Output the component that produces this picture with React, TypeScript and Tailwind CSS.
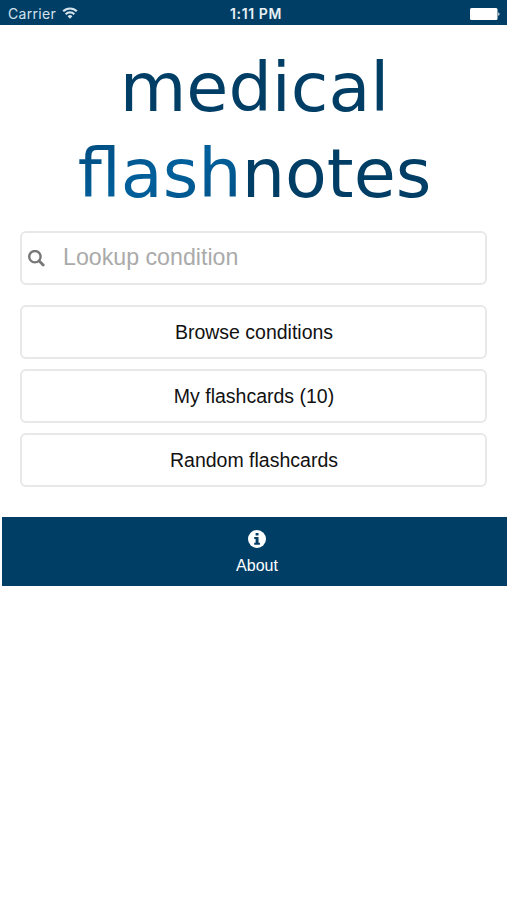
function SearchIcon() {
    return (
        <svg
            viewBox="0 0 17 17"
            className="size-[17px] shrink-0"
            fill="none"
            stroke="currentColor"
            strokeWidth="2.4"
        >
            <circle cx="6.9" cy="6.7" r="5.7" />
            <path d="m11.2 11 4 4" strokeWidth="2.8" strokeLinecap="round" />
        </svg>
    );
}

function InfoIcon() {
    return (
        <svg viewBox="0 0 18 18" className="size-[18px]">
            <circle cx="9" cy="9" r="9" fill="currentColor" />
            <g fill="#003e66">
                <rect x="7.6" y="3" width="2.9" height="2.6" rx="0.4" />
                <path d="M6.2 6.9h4.3v5.8h1.4v2H6.2v-2h1.4V8.9H6.2Z" />
            </g>
        </svg>
    );
}

function WifiIcon() {
    return (
        <svg
            viewBox="0 0 16 12"
            className="mb-0.5 h-3 w-4"
            fill="none"
            stroke="currentColor"
            strokeWidth="2.2"
        >
            <path d="M1.2 4.3a9.6 9.6 0 0 1 13.6 0" />
            <path d="M3.7 7.2a6.1 6.1 0 0 1 8.6 0" />
            <path d="M8 11.8 5.6 9.3a3.4 3.4 0 0 1 4.8 0Z" fill="currentColor" stroke="none" />
        </svg>
    );
}

function BatteryIcon() {
    return (
        <svg viewBox="0 0 30 12" className="h-3 w-[30px]" fill="currentColor">
            <rect x="0" y="0" width="27.5" height="12" rx="1.5" />
            <path d="M28.3 4.2c1.6.5 1.6 3.1 0 3.6Z" />
        </svg>
    );
}

const menuItems = [
    { id: "browse", label: "Browse conditions" },
    { id: "mine", label: "My flashcards (10)" },
    { id: "random", label: "Random flashcards" },
];

function StatusBar() {
    return (
        <div className="grid h-[25px] grid-cols-3 items-center bg-[#003e66] pt-0.5 pr-[7px] pl-2 font-['Inter',sans-serif] text-[#d5e3ed]">
            <div className="flex items-center gap-1.5">
                <span className="text-sm tracking-[0.3px]">Carrier</span>
                <WifiIcon />
            </div>
            <span className="pl-1 text-center text-sm font-semibold tracking-[0.6px] whitespace-nowrap text-[#e8f0f5]">
                1:11 PM
            </span>
            <div className="flex justify-end text-white">
                <BatteryIcon />
            </div>
        </div>
    );
}

export default function App() {
    return (
        <div className="min-h-screen bg-white font-['Liberation_Sans',Arial,sans-serif]">
            <StatusBar />

            <h1 className="pt-5 pl-0.5 text-center font-['DejaVu_Sans',sans-serif] text-[68.4px] leading-[86px] text-[#003e66]">
                <span className="block">medical</span>
                <span className="block">
                    <span className="bg-linear-to-br from-[#004a7c] via-[#00609c] to-[#004f83] bg-clip-text text-transparent">
                        flash
                    </span>
                    notes
                </span>
            </h1>

            <main className="px-5 pt-3.5">
                <label className="flex h-[54px] items-center rounded-md border-2 border-[#e8e8e8] pl-1.5 text-[#777]">
                    <SearchIcon />
                    <input
                        type="text"
                        placeholder="Lookup condition"
                        className="mb-0.5 ml-[18px] min-w-0 flex-1 text-[23.2px] outline-none placeholder:text-[#aaa]"
                    />
                </label>

                <div className="mt-5 flex flex-col gap-2.5">
                    {menuItems.map((item) => (
                        <button
                            key={item.id}
                            className="h-[54px] rounded-md border-2 border-[#e8e8e8] pt-0.5 pl-px text-[19.5px] text-[#111]"
                        >
                            {item.label}
                        </button>
                    ))}
                </div>
            </main>

            <footer className="mt-[30px] ml-0.5 flex h-[69px] flex-col items-center bg-[#003e66] pt-[13px] pl-[5px] text-white">
                <InfoIcon />
                <span className="mt-2 text-base leading-5">About</span>
            </footer>
        </div>
    );
}
